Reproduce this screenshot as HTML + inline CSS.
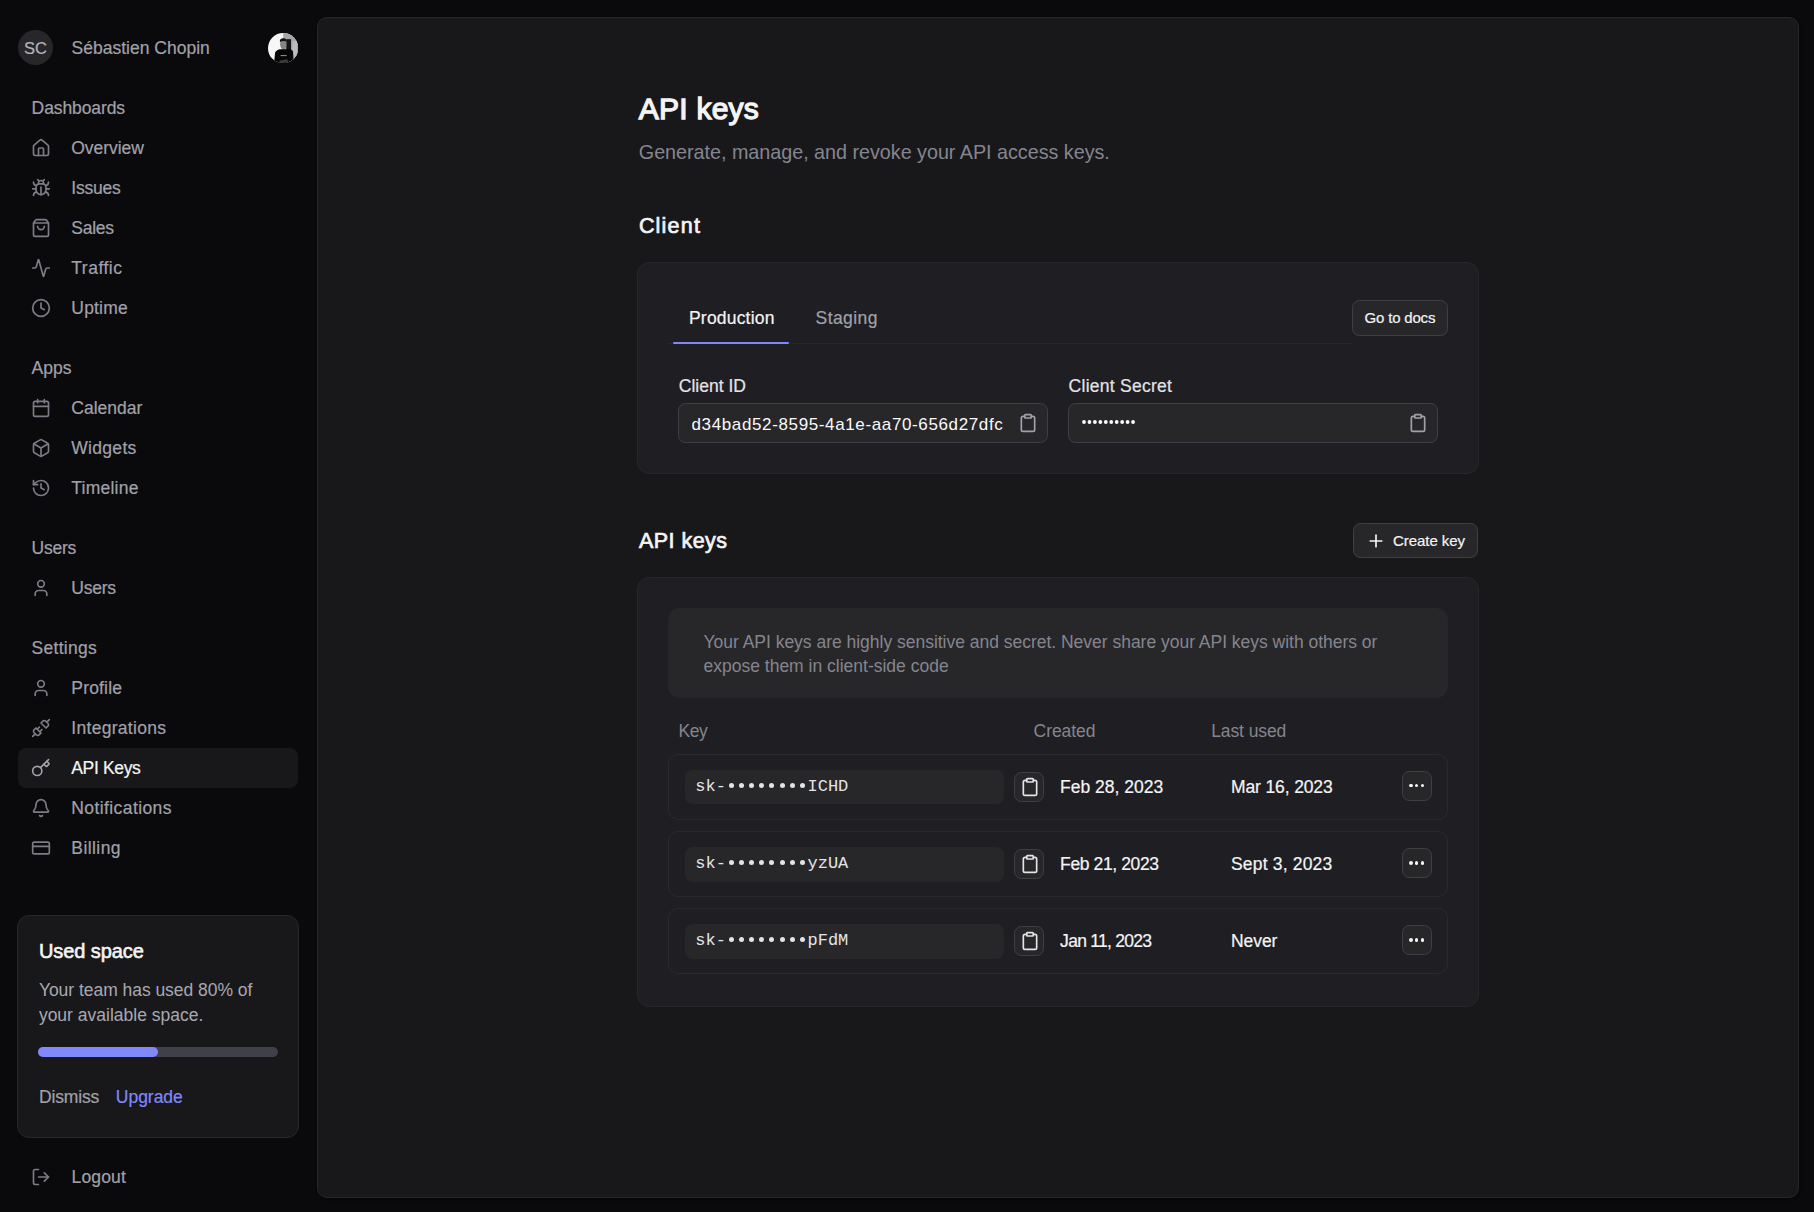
<!DOCTYPE html>
<html><head><meta charset="utf-8"><title>API keys</title>
<style>
html,body{margin:0;padding:0;}
body{width:1814px;height:1212px;background:#0a0a0c;position:relative;overflow:hidden;font-family:"Liberation Sans",sans-serif;}
.t{position:absolute;white-space:nowrap;line-height:1;}
.r{position:absolute;box-sizing:border-box;}
.i{position:absolute;display:block;}
.clip{position:absolute;overflow:hidden;}
</style></head><body>
<div class="r" style="left:18.00px;top:30.00px;width:35.00px;height:35.00px;background:#27272a;border-radius:18px;"></div>
<div class="t" style="left:24.04px;top:40px;font-size:16.5px;font-family:'Liberation Sans', sans-serif;-webkit-text-stroke:0.2px #b4b4bc;color:#b4b4bc;">SC</div>
<div class="t" style="left:71.50px;top:40px;font-size:17.5px;font-family:'Liberation Sans', sans-serif;-webkit-text-stroke:0.2px #a1a1aa;color:#a1a1aa;letter-spacing:0.010px;">Sébastien Chopin</div>
<svg class="i" style="left:268px;top:32.8px;width:30.3px;height:30.3px" viewBox="0 0 30 30">
<defs><clipPath id="cp"><circle cx="15" cy="15" r="15"/></clipPath></defs>
<g clip-path="url(#cp)">
<rect width="30" height="30" fill="#f7f7f7"/>
<rect x="15.1" y="0" width="15" height="30" fill="#a6a6a6"/>
<rect x="24.3" y="8" width="4.5" height="22" fill="#bcbcbc"/>
<rect x="18.1" y="6.1" width="4.7" height="12" fill="#151515"/>
<ellipse cx="15.1" cy="11.2" rx="3.1" ry="5.3" fill="#858585"/>
<path d="M11.8 9 C11.5 5.8 13.5 5.2 15.5 5.3 C17.8 5.4 18.6 6.8 18.4 8.4 C17 7.6 13.5 7.5 11.8 9Z" fill="#121212"/>
<path d="M6 30 L7 19.5 C8 17.5 10 16.5 12 16.2 L21 16.2 C23.5 16.5 24.7 17.5 24.8 19 L25.5 30 Z" fill="#050505"/>
<path d="M11 27.5 L19 25.8 L20 29 L12 30Z" fill="#3a3a3a"/>
<rect x="12.5" y="21.8" width="6" height="1.1" fill="#8a8a8a"/>
</g></svg>
<div class="r" style="left:18.00px;top:748.00px;width:280.00px;height:40.00px;background:#18181b;border-radius:8px;"></div>
<div class="t" style="left:31.60px;top:100px;font-size:17.5px;font-family:'Liberation Sans', sans-serif;-webkit-text-stroke:0.2px #a1a1aa;color:#a1a1aa;letter-spacing:-0.095px;">Dashboards</div>
<div class="t" style="left:71.30px;top:140px;font-size:17.5px;font-family:'Liberation Sans', sans-serif;-webkit-text-stroke:0.2px #a1a1aa;color:#a1a1aa;letter-spacing:-0.061px;">Overview</div>
<svg class="i" style="left:30.80px;top:137.80px;width:20px;height:20px" viewBox="0 0 24 24" fill="none" stroke="#7c7c86" stroke-width="2.0" stroke-linecap="round" stroke-linejoin="round"><path d="M15 21v-8a1 1 0 0 0-1-1h-4a1 1 0 0 0-1 1v8"/><path d="M3 10a2 2 0 0 1 .709-1.528l7-5.999a2 2 0 0 1 2.582 0l7 5.999A2 2 0 0 1 21 10v9a2 2 0 0 1-2 2H5a2 2 0 0 1-2-2z"/></svg>
<div class="t" style="left:71.30px;top:180px;font-size:17.5px;font-family:'Liberation Sans', sans-serif;-webkit-text-stroke:0.2px #a1a1aa;color:#a1a1aa;letter-spacing:-0.235px;">Issues</div>
<svg class="i" style="left:30.80px;top:177.80px;width:20px;height:20px" viewBox="0 0 24 24" fill="none" stroke="#7c7c86" stroke-width="2.0" stroke-linecap="round" stroke-linejoin="round"><path d="m8 2 1.88 1.88"/><path d="M14.12 3.88 16 2"/><path d="M9 7.13v-1a3.003 3.003 0 1 1 6 0v1"/><path d="M12 20c-3.3 0-6-2.7-6-6v-3a4 4 0 0 1 4-4h4a4 4 0 0 1 4 4v3c0 3.3-2.7 6-6 6"/><path d="M12 20v-9"/><path d="M6.53 9C4.6 8.8 3 7.1 3 5"/><path d="M6 13H2"/><path d="M3 21c0-2.1 1.7-3.9 3.8-4"/><path d="M20.97 5c0 2.1-1.6 3.8-3.5 4"/><path d="M22 13h-4"/><path d="M17.2 17c2.1.1 3.8 1.9 3.8 4"/></svg>
<div class="t" style="left:71.30px;top:220px;font-size:17.5px;font-family:'Liberation Sans', sans-serif;-webkit-text-stroke:0.2px #a1a1aa;color:#a1a1aa;letter-spacing:-0.244px;">Sales</div>
<svg class="i" style="left:30.80px;top:217.80px;width:20px;height:20px" viewBox="0 0 24 24" fill="none" stroke="#7c7c86" stroke-width="2.0" stroke-linecap="round" stroke-linejoin="round"><path d="M16 10a4 4 0 0 1-8 0"/><path d="M3.103 6.034h17.794"/><path d="M3.4 5.467a2 2 0 0 0-.4 1.2V20a2 2 0 0 0 2 2h14a2 2 0 0 0 2-2V6.667a2 2 0 0 0-.4-1.2l-2-2.667A2 2 0 0 0 17 2H7a2 2 0 0 0-1.6.8z"/></svg>
<div class="t" style="left:71.30px;top:260px;font-size:17.5px;font-family:'Liberation Sans', sans-serif;-webkit-text-stroke:0.2px #a1a1aa;color:#a1a1aa;letter-spacing:0.493px;">Traffic</div>
<svg class="i" style="left:30.80px;top:257.80px;width:20px;height:20px" viewBox="0 0 24 24" fill="none" stroke="#7c7c86" stroke-width="2.0" stroke-linecap="round" stroke-linejoin="round"><path d="M22 12h-2.48a2 2 0 0 0-1.93 1.46l-2.35 8.36a.25.25 0 0 1-.48 0L9.24 2.18a.25.25 0 0 0-.48 0l-2.35 8.36A2 2 0 0 1 4.49 12H2"/></svg>
<div class="t" style="left:71.30px;top:300px;font-size:17.5px;font-family:'Liberation Sans', sans-serif;-webkit-text-stroke:0.2px #a1a1aa;color:#a1a1aa;letter-spacing:0.194px;">Uptime</div>
<svg class="i" style="left:30.80px;top:297.80px;width:20px;height:20px" viewBox="0 0 24 24" fill="none" stroke="#7c7c86" stroke-width="2.0" stroke-linecap="round" stroke-linejoin="round"><circle cx="12" cy="12" r="10"/><polyline points="12 6 12 12 16 14"/></svg>
<div class="t" style="left:31.60px;top:360px;font-size:17.5px;font-family:'Liberation Sans', sans-serif;-webkit-text-stroke:0.2px #a1a1aa;color:#a1a1aa;letter-spacing:0.005px;">Apps</div>
<div class="t" style="left:71.30px;top:400px;font-size:17.5px;font-family:'Liberation Sans', sans-serif;-webkit-text-stroke:0.2px #a1a1aa;color:#a1a1aa;letter-spacing:-0.002px;">Calendar</div>
<svg class="i" style="left:30.80px;top:397.80px;width:20px;height:20px" viewBox="0 0 24 24" fill="none" stroke="#7c7c86" stroke-width="2.0" stroke-linecap="round" stroke-linejoin="round"><path d="M8 2v4"/><path d="M16 2v4"/><rect width="18" height="18" x="3" y="4" rx="2"/><path d="M3 10h18"/></svg>
<div class="t" style="left:71.30px;top:440px;font-size:17.5px;font-family:'Liberation Sans', sans-serif;-webkit-text-stroke:0.2px #a1a1aa;color:#a1a1aa;letter-spacing:0.298px;">Widgets</div>
<svg class="i" style="left:30.80px;top:437.80px;width:20px;height:20px" viewBox="0 0 24 24" fill="none" stroke="#7c7c86" stroke-width="2.0" stroke-linecap="round" stroke-linejoin="round"><path d="M21 8a2 2 0 0 0-1-1.73l-7-4a2 2 0 0 0-2 0l-7 4A2 2 0 0 0 3 8v8a2 2 0 0 0 1 1.73l7 4a2 2 0 0 0 2 0l7-4A2 2 0 0 0 21 16Z"/><path d="m3.3 7 8.7 5 8.7-5"/><path d="M12 22V12"/></svg>
<div class="t" style="left:71.30px;top:480px;font-size:17.5px;font-family:'Liberation Sans', sans-serif;-webkit-text-stroke:0.2px #a1a1aa;color:#a1a1aa;letter-spacing:0.232px;">Timeline</div>
<svg class="i" style="left:30.80px;top:477.80px;width:20px;height:20px" viewBox="0 0 24 24" fill="none" stroke="#7c7c86" stroke-width="2.0" stroke-linecap="round" stroke-linejoin="round"><path d="M3 12a9 9 0 1 0 9-9 9.75 9.75 0 0 0-6.74 2.74L3 8"/><path d="M3 3v5h5"/><path d="M12 7v5l4 2"/></svg>
<div class="t" style="left:31.60px;top:540px;font-size:17.5px;font-family:'Liberation Sans', sans-serif;-webkit-text-stroke:0.2px #a1a1aa;color:#a1a1aa;letter-spacing:-0.274px;">Users</div>
<div class="t" style="left:71.30px;top:580px;font-size:17.5px;font-family:'Liberation Sans', sans-serif;-webkit-text-stroke:0.2px #a1a1aa;color:#a1a1aa;letter-spacing:-0.224px;">Users</div>
<svg class="i" style="left:30.80px;top:577.80px;width:20px;height:20px" viewBox="0 0 24 24" fill="none" stroke="#7c7c86" stroke-width="2.0" stroke-linecap="round" stroke-linejoin="round"><path d="M19 21v-2a4 4 0 0 0-4-4H9a4 4 0 0 0-4 4v2"/><circle cx="12" cy="7" r="4"/></svg>
<div class="t" style="left:31.60px;top:640px;font-size:17.5px;font-family:'Liberation Sans', sans-serif;-webkit-text-stroke:0.2px #a1a1aa;color:#a1a1aa;letter-spacing:0.281px;">Settings</div>
<div class="t" style="left:71.30px;top:680px;font-size:17.5px;font-family:'Liberation Sans', sans-serif;-webkit-text-stroke:0.2px #a1a1aa;color:#a1a1aa;letter-spacing:0.183px;">Profile</div>
<svg class="i" style="left:30.80px;top:677.80px;width:20px;height:20px" viewBox="0 0 24 24" fill="none" stroke="#7c7c86" stroke-width="2.0" stroke-linecap="round" stroke-linejoin="round"><path d="M19 21v-2a4 4 0 0 0-4-4H9a4 4 0 0 0-4 4v2"/><circle cx="12" cy="7" r="4"/></svg>
<div class="t" style="left:71.30px;top:720px;font-size:17.5px;font-family:'Liberation Sans', sans-serif;-webkit-text-stroke:0.2px #a1a1aa;color:#a1a1aa;letter-spacing:0.296px;">Integrations</div>
<svg class="i" style="left:30.80px;top:717.80px;width:20px;height:20px" viewBox="0 0 24 24" fill="none" stroke="#7c7c86" stroke-width="2.0" stroke-linecap="round" stroke-linejoin="round"><path d="m19 5 3-3"/><path d="m2 22 3-3"/><path d="M6.3 20.3a2.4 2.4 0 0 0 3.4 0L12 18l-6-6-2.3 2.3a2.4 2.4 0 0 0 0 3.4Z"/><path d="M7.5 13.5 10 11"/><path d="M10.5 16.5 13 14"/><path d="m12 6 6 6 2.3-2.3a2.4 2.4 0 0 0 0-3.4l-2.6-2.6a2.4 2.4 0 0 0-3.4 0Z"/></svg>
<div class="t" style="left:71.30px;top:760px;font-size:17.5px;font-family:'Liberation Sans', sans-serif;-webkit-text-stroke:0.2px #f4f4f5;color:#f4f4f5;letter-spacing:-0.353px;">API Keys</div>
<svg class="i" style="left:30.80px;top:757.80px;width:20px;height:20px" viewBox="0 0 24 24" fill="none" stroke="#a1a1aa" stroke-width="2.0" stroke-linecap="round" stroke-linejoin="round"><path d="m15.5 7.5 2.3 2.3a1 1 0 0 0 1.4 0l2.1-2.1a1 1 0 0 0 0-1.4L19 4"/><path d="m21 2-9.6 9.6"/><circle cx="7.5" cy="15.5" r="5.5"/></svg>
<div class="t" style="left:71.30px;top:800px;font-size:17.5px;font-family:'Liberation Sans', sans-serif;-webkit-text-stroke:0.2px #a1a1aa;color:#a1a1aa;letter-spacing:0.407px;">Notifications</div>
<svg class="i" style="left:30.80px;top:797.80px;width:20px;height:20px" viewBox="0 0 24 24" fill="none" stroke="#7c7c86" stroke-width="2.0" stroke-linecap="round" stroke-linejoin="round"><path d="M10.268 21a2 2 0 0 0 3.464 0"/><path d="M3.262 15.326A1 1 0 0 0 4 17h16a1 1 0 0 0 .74-1.673C19.41 13.956 18 12.499 18 8A6 6 0 0 0 6 8c0 4.499-1.411 5.956-2.738 7.326"/></svg>
<div class="t" style="left:71.30px;top:840px;font-size:17.5px;font-family:'Liberation Sans', sans-serif;-webkit-text-stroke:0.2px #a1a1aa;color:#a1a1aa;letter-spacing:0.435px;">Billing</div>
<svg class="i" style="left:30.80px;top:837.80px;width:20px;height:20px" viewBox="0 0 24 24" fill="none" stroke="#7c7c86" stroke-width="2.0" stroke-linecap="round" stroke-linejoin="round"><rect width="20" height="14" x="2" y="5" rx="2"/><line x1="2" x2="22" y1="10" y2="10"/></svg>
<div class="r" style="left:17.00px;top:915.00px;width:282.00px;height:222.50px;background:#18181b;border:1px solid #27272a;border-radius:12px;"></div>
<div class="t" style="left:38.90px;top:941px;font-size:20px;font-family:'Liberation Sans', sans-serif;color:#f4f4f5;letter-spacing:-0.068px;-webkit-text-stroke:0.6px #f4f4f5;">Used space</div>
<div class="t" style="left:38.90px;top:982px;font-size:17.5px;font-family:'Liberation Sans', sans-serif;color:#a8a8b2;letter-spacing:-0.039px;">Your team has used 80% of</div>
<div class="t" style="left:38.90px;top:1007px;font-size:17.5px;font-family:'Liberation Sans', sans-serif;color:#a8a8b2;">your available space.</div>
<div class="r" style="left:38.00px;top:1047.00px;width:240.00px;height:9.50px;background:#40404a;border-radius:6px;"></div>
<div class="r" style="left:38.00px;top:1047.00px;width:119.70px;height:9.50px;background:#8088fb;border-radius:6px;"></div>
<div class="t" style="left:38.90px;top:1089px;font-size:17.5px;font-family:'Liberation Sans', sans-serif;-webkit-text-stroke:0.2px #a1a1aa;color:#a1a1aa;letter-spacing:-0.140px;">Dismiss</div>
<div class="t" style="left:115.80px;top:1089px;font-size:17.5px;font-family:'Liberation Sans', sans-serif;-webkit-text-stroke:0.2px #8088fb;color:#8088fb;letter-spacing:-0.021px;">Upgrade</div>
<svg class="i" style="left:30.80px;top:1166.50px;width:20px;height:20px" viewBox="0 0 24 24" fill="none" stroke="#7c7c86" stroke-width="2.0" stroke-linecap="round" stroke-linejoin="round"><path d="M9 21H5a2 2 0 0 1-2-2V5a2 2 0 0 1 2-2h4"/><polyline points="16 17 21 12 16 7"/><line x1="21" x2="9" y1="12" y2="12"/></svg>
<div class="t" style="left:71.50px;top:1169px;font-size:17.5px;font-family:'Liberation Sans', sans-serif;-webkit-text-stroke:0.2px #a1a1aa;color:#a1a1aa;letter-spacing:0.156px;">Logout</div>
<div class="r" style="left:317.00px;top:17.00px;width:1482.00px;height:1181.00px;background:#18181b;border:1px solid #27272a;border-radius:10px;box-sizing:border-box;box-shadow:0 1px 3px rgba(0,0,0,0.6);"></div>
<div class="t" style="left:638.80px;top:94px;font-size:30px;font-family:'Liberation Sans', sans-serif;color:#f4f4f5;letter-spacing:0.232px;-webkit-text-stroke:1.3px #f4f4f5;">API keys</div>
<div class="t" style="left:638.80px;top:143px;font-size:19.75px;font-family:'Liberation Sans', sans-serif;color:#85858e;letter-spacing:-0.021px;">Generate, manage, and revoke your API access keys.</div>
<div class="t" style="left:638.90px;top:216px;font-size:21.5px;font-family:'Liberation Sans', sans-serif;color:#f4f4f5;letter-spacing:1.207px;-webkit-text-stroke:0.7px #f4f4f5;">Client</div>
<div class="r" style="left:637.00px;top:262.00px;width:842.00px;height:212.00px;background:#1f1f23;border:1px solid #27272a;border-radius:12px;box-sizing:border-box;"></div>
<div class="r" style="left:668.00px;top:343.00px;width:684.00px;height:1.00px;background:#27272a;border-radius:0px;"></div>
<div class="r" style="left:673.00px;top:341.50px;width:116.00px;height:2.50px;background:#8088fb;border-radius:2px;"></div>
<div class="t" style="left:689.00px;top:310px;font-size:17.5px;font-family:'Liberation Sans', sans-serif;-webkit-text-stroke:0.2px #f4f4f5;color:#f4f4f5;letter-spacing:0.194px;">Production</div>
<div class="t" style="left:815.60px;top:310px;font-size:17.5px;font-family:'Liberation Sans', sans-serif;-webkit-text-stroke:0.2px #a1a1aa;color:#a1a1aa;letter-spacing:0.408px;">Staging</div>
<div class="r" style="left:1352.00px;top:300.00px;width:96.00px;height:35.50px;background:#27272a;border:1px solid #3f3f46;border-radius:7.5px;box-sizing:border-box;"></div>
<div class="t" style="left:1364.60px;top:310px;font-size:15px;font-family:'Liberation Sans', sans-serif;-webkit-text-stroke:0.2px #f4f4f5;color:#f4f4f5;letter-spacing:-0.193px;">Go to docs</div>
<div class="t" style="left:678.80px;top:378px;font-size:17.5px;font-family:'Liberation Sans', sans-serif;-webkit-text-stroke:0.2px #e4e4e7;color:#e4e4e7;letter-spacing:0.012px;">Client ID</div>
<div class="t" style="left:1068.60px;top:378px;font-size:17.5px;font-family:'Liberation Sans', sans-serif;-webkit-text-stroke:0.2px #e4e4e7;color:#e4e4e7;letter-spacing:0.260px;">Client Secret</div>
<div class="r" style="left:678.00px;top:403.00px;width:370.00px;height:40.00px;background:#27272a;border:1px solid #3f3f46;border-radius:7.5px;box-sizing:border-box;"></div>
<div class="r" style="left:1068.00px;top:403.00px;width:370.00px;height:40.00px;background:#27272a;border:1px solid #3f3f46;border-radius:7.5px;box-sizing:border-box;"></div>
<div class="clip" style="left:691.5px;top:408px;width:311.5px;height:30px">
<div class="t" style="left:0.00px;top:8px;font-size:17px;font-family:'Liberation Sans', sans-serif;color:#fafafa;letter-spacing:0.63px;">d34bad52-8595-4a1e-aa70-656d27dfc1a2</div>
</div>
<svg class="i" style="left:1017.90px;top:413.20px;width:20px;height:20px" viewBox="0 0 24 24" fill="none" stroke="#a1a1aa" stroke-width="2" stroke-linecap="round" stroke-linejoin="round"><rect width="8" height="4" x="8" y="2" rx="1" ry="1"/><path d="M16 4h2a2 2 0 0 1 2 2v14a2 2 0 0 1-2 2H6a2 2 0 0 1-2-2V6a2 2 0 0 1 2-2h2"/></svg>
<svg class="i" style="left:1080.5px;top:418.4px;width:60px;height:8px" viewBox="0 0 60 8" fill="#fafafa"><circle cx="3.00" cy="4" r="1.9"/><circle cx="8.45" cy="4" r="1.9"/><circle cx="13.90" cy="4" r="1.9"/><circle cx="19.35" cy="4" r="1.9"/><circle cx="24.80" cy="4" r="1.9"/><circle cx="30.25" cy="4" r="1.9"/><circle cx="35.70" cy="4" r="1.9"/><circle cx="41.15" cy="4" r="1.9"/><circle cx="46.60" cy="4" r="1.9"/><circle cx="52.05" cy="4" r="1.9"/></svg>
<svg class="i" style="left:1408.00px;top:413.20px;width:20px;height:20px" viewBox="0 0 24 24" fill="none" stroke="#a1a1aa" stroke-width="2" stroke-linecap="round" stroke-linejoin="round"><rect width="8" height="4" x="8" y="2" rx="1" ry="1"/><path d="M16 4h2a2 2 0 0 1 2 2v14a2 2 0 0 1-2 2H6a2 2 0 0 1-2-2V6a2 2 0 0 1 2-2h2"/></svg>
<div class="t" style="left:639.00px;top:531px;font-size:21.5px;font-family:'Liberation Sans', sans-serif;color:#f4f4f5;letter-spacing:0.452px;-webkit-text-stroke:0.7px #f4f4f5;">API keys</div>
<div class="r" style="left:1353.00px;top:523.00px;width:125.00px;height:35.00px;background:#27272a;border:1px solid #3f3f46;border-radius:7.5px;box-sizing:border-box;"></div>
<svg class="i" style="left:1365.60px;top:530.50px;width:20px;height:20px" viewBox="0 0 24 24" fill="none" stroke="#f4f4f5" stroke-width="2" stroke-linecap="round" stroke-linejoin="round"><path d="M5 12h14"/><path d="M12 5v14"/></svg>
<div class="t" style="left:1393.00px;top:533px;font-size:15px;font-family:'Liberation Sans', sans-serif;-webkit-text-stroke:0.2px #f4f4f5;color:#f4f4f5;letter-spacing:-0.059px;">Create key</div>
<div class="r" style="left:637.00px;top:577.00px;width:842.00px;height:430.00px;background:#1f1f23;border:1px solid #27272a;border-radius:12px;box-sizing:border-box;"></div>
<div class="r" style="left:668.00px;top:608.00px;width:780.00px;height:90.00px;background:#27272a;border-radius:12px;"></div>
<div class="t" style="left:703.50px;top:634px;font-size:17.5px;font-family:'Liberation Sans', sans-serif;color:#85858e;letter-spacing:-0.017px;">Your API keys are highly sensitive and secret. Never share your API keys with others or</div>
<div class="t" style="left:703.50px;top:658px;font-size:17.5px;font-family:'Liberation Sans', sans-serif;color:#85858e;">expose them in client-side code</div>
<div class="t" style="left:678.60px;top:723px;font-size:17.5px;font-family:'Liberation Sans', sans-serif;color:#85858e;letter-spacing:-0.477px;">Key</div>
<div class="t" style="left:1033.60px;top:723px;font-size:17.5px;font-family:'Liberation Sans', sans-serif;color:#85858e;letter-spacing:-0.076px;">Created</div>
<div class="t" style="left:1211.20px;top:723px;font-size:17.5px;font-family:'Liberation Sans', sans-serif;color:#85858e;letter-spacing:-0.098px;">Last used</div>
<div class="r" style="left:668.00px;top:753.50px;width:780.00px;height:66.30px;background:transparent;border:1px solid #2a2a2e;border-radius:10px;box-sizing:border-box;"></div>
<div class="r" style="left:684.80px;top:769.50px;width:319.20px;height:34.50px;background:#27272a;border-radius:7.5px;"></div>
<div class="t" style="left:695.30px;top:778px;font-size:17px;font-family:'Liberation Mono', monospace;color:#e4e4e7;">sk-</div>
<div class="r" style="left:728.50px;top:782.70px;width:5.00px;height:5.00px;background:#e4e4e7;border-radius:3px;"></div>
<div class="r" style="left:738.70px;top:782.70px;width:5.00px;height:5.00px;background:#e4e4e7;border-radius:3px;"></div>
<div class="r" style="left:748.90px;top:782.70px;width:5.00px;height:5.00px;background:#e4e4e7;border-radius:3px;"></div>
<div class="r" style="left:759.10px;top:782.70px;width:5.00px;height:5.00px;background:#e4e4e7;border-radius:3px;"></div>
<div class="r" style="left:769.30px;top:782.70px;width:5.00px;height:5.00px;background:#e4e4e7;border-radius:3px;"></div>
<div class="r" style="left:779.50px;top:782.70px;width:5.00px;height:5.00px;background:#e4e4e7;border-radius:3px;"></div>
<div class="r" style="left:789.70px;top:782.70px;width:5.00px;height:5.00px;background:#e4e4e7;border-radius:3px;"></div>
<div class="r" style="left:799.90px;top:782.70px;width:5.00px;height:5.00px;background:#e4e4e7;border-radius:3px;"></div>
<div class="t" style="left:807.50px;top:778px;font-size:17px;font-family:'Liberation Mono', monospace;color:#e4e4e7;">ICHD</div>
<div class="r" style="left:1014.20px;top:771.80px;width:30.00px;height:30.20px;background:#27272a;border:1px solid #3f3f46;border-radius:7.5px;box-sizing:border-box;"></div>
<svg class="i" style="left:1019.70px;top:776.90px;width:20px;height:20px" viewBox="0 0 24 24" fill="none" stroke="#e4e4e7" stroke-width="2" stroke-linecap="round" stroke-linejoin="round"><rect width="8" height="4" x="8" y="2" rx="1" ry="1"/><path d="M16 4h2a2 2 0 0 1 2 2v14a2 2 0 0 1-2 2H6a2 2 0 0 1-2-2V6a2 2 0 0 1 2-2h2"/></svg>
<div class="t" style="left:1060.10px;top:779px;font-size:17.5px;font-family:'Liberation Sans', sans-serif;-webkit-text-stroke:0.2px #f4f4f5;color:#f4f4f5;letter-spacing:-0.002px;">Feb 28, 2023</div>
<div class="t" style="left:1231.00px;top:779px;font-size:17.5px;font-family:'Liberation Sans', sans-serif;-webkit-text-stroke:0.2px #f4f4f5;color:#f4f4f5;letter-spacing:-0.128px;">Mar 16, 2023</div>
<div class="r" style="left:1402.00px;top:770.50px;width:30.00px;height:30.00px;background:#27272a;border:1px solid #3f3f46;border-radius:7.5px;box-sizing:border-box;"></div>
<div class="r" style="left:1409.10px;top:783.70px;width:3.60px;height:3.60px;background:#f4f4f5;border-radius:2px;"></div>
<div class="r" style="left:1414.90px;top:783.70px;width:3.60px;height:3.60px;background:#f4f4f5;border-radius:2px;"></div>
<div class="r" style="left:1420.70px;top:783.70px;width:3.60px;height:3.60px;background:#f4f4f5;border-radius:2px;"></div>
<div class="r" style="left:668.00px;top:831.00px;width:780.00px;height:66.30px;background:transparent;border:1px solid #2a2a2e;border-radius:10px;box-sizing:border-box;"></div>
<div class="r" style="left:684.80px;top:847.00px;width:319.20px;height:34.50px;background:#27272a;border-radius:7.5px;"></div>
<div class="t" style="left:695.30px;top:855px;font-size:17px;font-family:'Liberation Mono', monospace;color:#e4e4e7;">sk-</div>
<div class="r" style="left:728.50px;top:860.20px;width:5.00px;height:5.00px;background:#e4e4e7;border-radius:3px;"></div>
<div class="r" style="left:738.70px;top:860.20px;width:5.00px;height:5.00px;background:#e4e4e7;border-radius:3px;"></div>
<div class="r" style="left:748.90px;top:860.20px;width:5.00px;height:5.00px;background:#e4e4e7;border-radius:3px;"></div>
<div class="r" style="left:759.10px;top:860.20px;width:5.00px;height:5.00px;background:#e4e4e7;border-radius:3px;"></div>
<div class="r" style="left:769.30px;top:860.20px;width:5.00px;height:5.00px;background:#e4e4e7;border-radius:3px;"></div>
<div class="r" style="left:779.50px;top:860.20px;width:5.00px;height:5.00px;background:#e4e4e7;border-radius:3px;"></div>
<div class="r" style="left:789.70px;top:860.20px;width:5.00px;height:5.00px;background:#e4e4e7;border-radius:3px;"></div>
<div class="r" style="left:799.90px;top:860.20px;width:5.00px;height:5.00px;background:#e4e4e7;border-radius:3px;"></div>
<div class="t" style="left:807.50px;top:855px;font-size:17px;font-family:'Liberation Mono', monospace;color:#e4e4e7;">yzUA</div>
<div class="r" style="left:1014.20px;top:849.30px;width:30.00px;height:30.20px;background:#27272a;border:1px solid #3f3f46;border-radius:7.5px;box-sizing:border-box;"></div>
<svg class="i" style="left:1019.70px;top:854.40px;width:20px;height:20px" viewBox="0 0 24 24" fill="none" stroke="#e4e4e7" stroke-width="2" stroke-linecap="round" stroke-linejoin="round"><rect width="8" height="4" x="8" y="2" rx="1" ry="1"/><path d="M16 4h2a2 2 0 0 1 2 2v14a2 2 0 0 1-2 2H6a2 2 0 0 1-2-2V6a2 2 0 0 1 2-2h2"/></svg>
<div class="t" style="left:1060.10px;top:856px;font-size:17.5px;font-family:'Liberation Sans', sans-serif;-webkit-text-stroke:0.2px #f4f4f5;color:#f4f4f5;letter-spacing:-0.384px;">Feb 21, 2023</div>
<div class="t" style="left:1231.00px;top:856px;font-size:17.5px;font-family:'Liberation Sans', sans-serif;-webkit-text-stroke:0.2px #f4f4f5;color:#f4f4f5;letter-spacing:0.178px;">Sept 3, 2023</div>
<div class="r" style="left:1402.00px;top:848.00px;width:30.00px;height:30.00px;background:#27272a;border:1px solid #3f3f46;border-radius:7.5px;box-sizing:border-box;"></div>
<div class="r" style="left:1409.10px;top:861.20px;width:3.60px;height:3.60px;background:#f4f4f5;border-radius:2px;"></div>
<div class="r" style="left:1414.90px;top:861.20px;width:3.60px;height:3.60px;background:#f4f4f5;border-radius:2px;"></div>
<div class="r" style="left:1420.70px;top:861.20px;width:3.60px;height:3.60px;background:#f4f4f5;border-radius:2px;"></div>
<div class="r" style="left:668.00px;top:908.00px;width:780.00px;height:66.30px;background:transparent;border:1px solid #2a2a2e;border-radius:10px;box-sizing:border-box;"></div>
<div class="r" style="left:684.80px;top:924.00px;width:319.20px;height:34.50px;background:#27272a;border-radius:7.5px;"></div>
<div class="t" style="left:695.30px;top:932px;font-size:17px;font-family:'Liberation Mono', monospace;color:#e4e4e7;">sk-</div>
<div class="r" style="left:728.50px;top:937.20px;width:5.00px;height:5.00px;background:#e4e4e7;border-radius:3px;"></div>
<div class="r" style="left:738.70px;top:937.20px;width:5.00px;height:5.00px;background:#e4e4e7;border-radius:3px;"></div>
<div class="r" style="left:748.90px;top:937.20px;width:5.00px;height:5.00px;background:#e4e4e7;border-radius:3px;"></div>
<div class="r" style="left:759.10px;top:937.20px;width:5.00px;height:5.00px;background:#e4e4e7;border-radius:3px;"></div>
<div class="r" style="left:769.30px;top:937.20px;width:5.00px;height:5.00px;background:#e4e4e7;border-radius:3px;"></div>
<div class="r" style="left:779.50px;top:937.20px;width:5.00px;height:5.00px;background:#e4e4e7;border-radius:3px;"></div>
<div class="r" style="left:789.70px;top:937.20px;width:5.00px;height:5.00px;background:#e4e4e7;border-radius:3px;"></div>
<div class="r" style="left:799.90px;top:937.20px;width:5.00px;height:5.00px;background:#e4e4e7;border-radius:3px;"></div>
<div class="t" style="left:807.50px;top:932px;font-size:17px;font-family:'Liberation Mono', monospace;color:#e4e4e7;">pFdM</div>
<div class="r" style="left:1014.20px;top:926.30px;width:30.00px;height:30.20px;background:#27272a;border:1px solid #3f3f46;border-radius:7.5px;box-sizing:border-box;"></div>
<svg class="i" style="left:1019.70px;top:931.40px;width:20px;height:20px" viewBox="0 0 24 24" fill="none" stroke="#e4e4e7" stroke-width="2" stroke-linecap="round" stroke-linejoin="round"><rect width="8" height="4" x="8" y="2" rx="1" ry="1"/><path d="M16 4h2a2 2 0 0 1 2 2v14a2 2 0 0 1-2 2H6a2 2 0 0 1-2-2V6a2 2 0 0 1 2-2h2"/></svg>
<div class="t" style="left:1060.10px;top:933px;font-size:17.5px;font-family:'Liberation Sans', sans-serif;-webkit-text-stroke:0.2px #f4f4f5;color:#f4f4f5;letter-spacing:-0.717px;">Jan 11, 2023</div>
<div class="t" style="left:1231.00px;top:933px;font-size:17.5px;font-family:'Liberation Sans', sans-serif;-webkit-text-stroke:0.2px #f4f4f5;color:#f4f4f5;letter-spacing:-0.070px;">Never</div>
<div class="r" style="left:1402.00px;top:925.00px;width:30.00px;height:30.00px;background:#27272a;border:1px solid #3f3f46;border-radius:7.5px;box-sizing:border-box;"></div>
<div class="r" style="left:1409.10px;top:938.20px;width:3.60px;height:3.60px;background:#f4f4f5;border-radius:2px;"></div>
<div class="r" style="left:1414.90px;top:938.20px;width:3.60px;height:3.60px;background:#f4f4f5;border-radius:2px;"></div>
<div class="r" style="left:1420.70px;top:938.20px;width:3.60px;height:3.60px;background:#f4f4f5;border-radius:2px;"></div>
</body></html>
